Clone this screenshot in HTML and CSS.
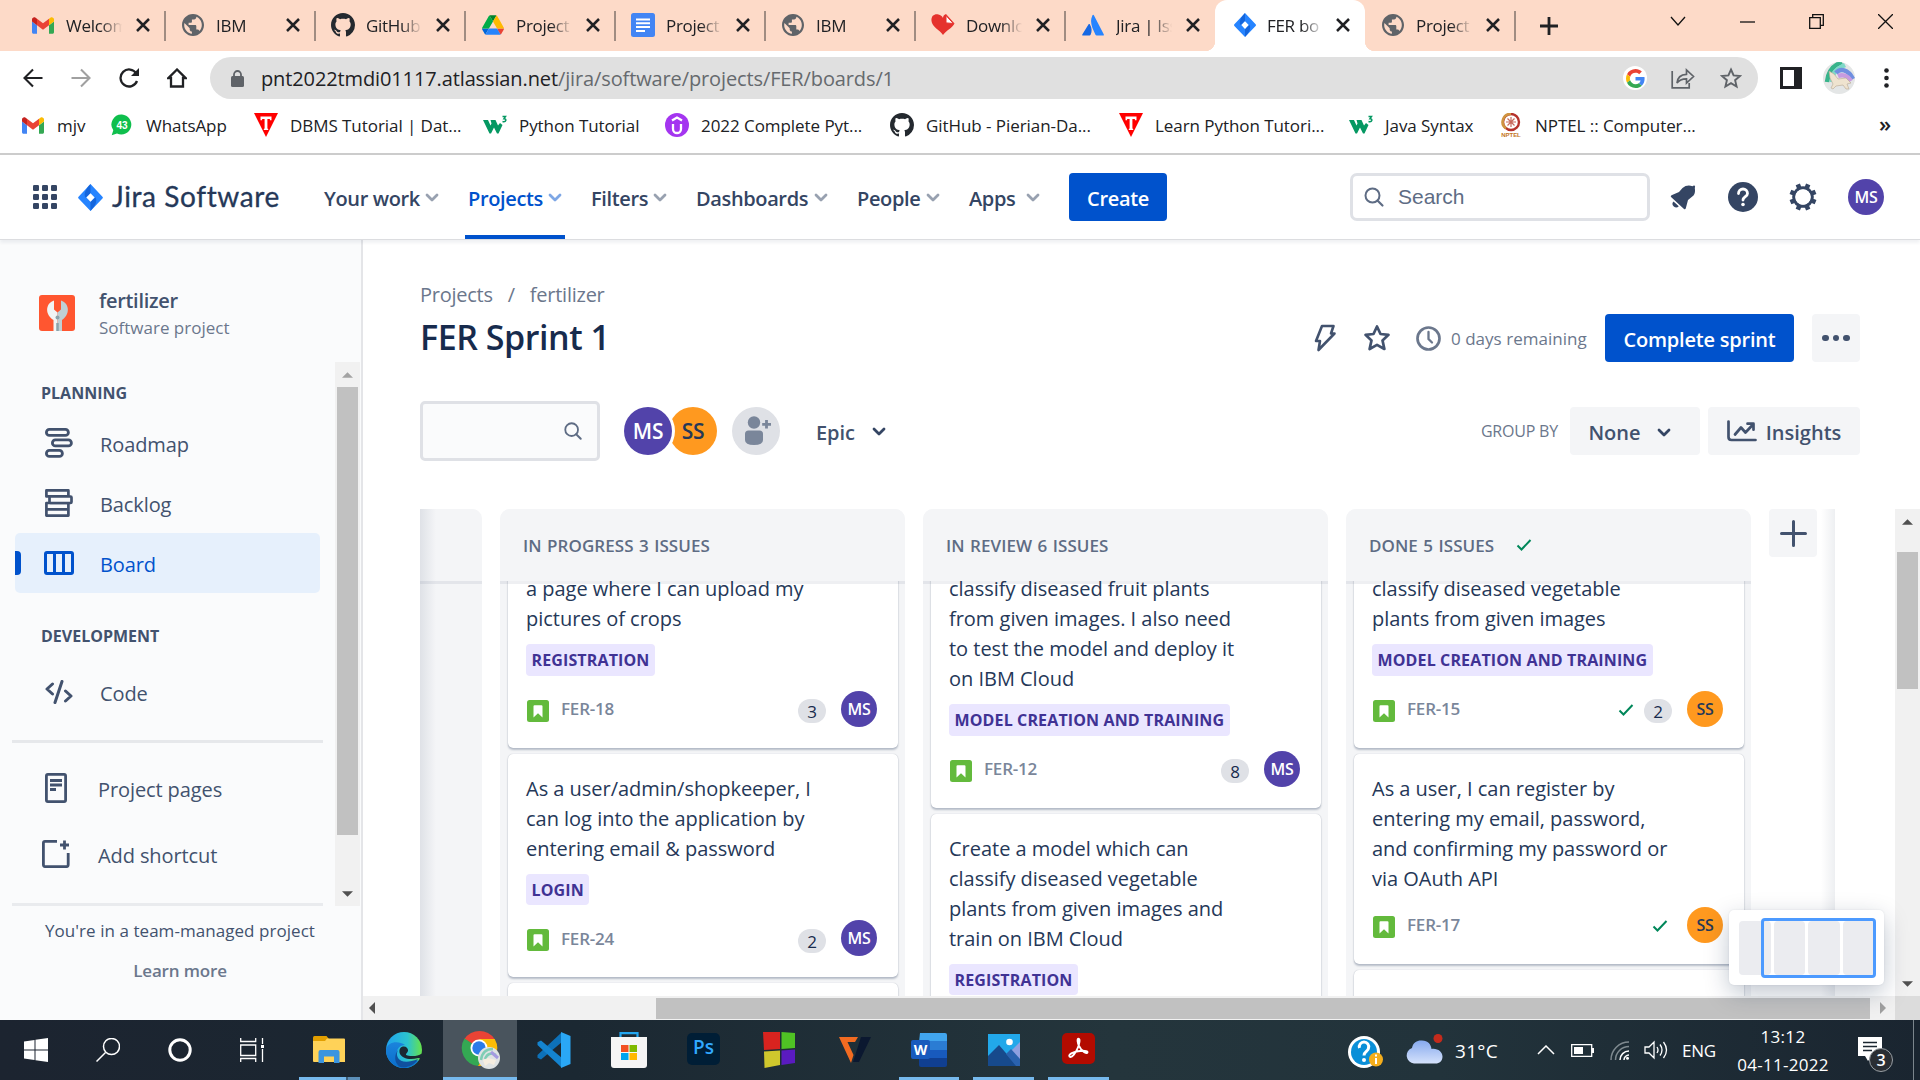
FILE: index.html
```html
<!DOCTYPE html>
<html lang="en">
<head>
<meta charset="utf-8">
<title>FER board - Agile board - Jira</title>
<link rel="stylesheet" href="styles.css">
</head>
<body>
<svg width="0" height="0" class="defs" aria-hidden="true">
  <symbol id="gmail" viewBox="52 42 88 66"><path fill="#4285f4" d="M58 108h14V74L52 59v43c0 3.320 2.690 6 6 6"/><path fill="#34a853" d="M120 108h14c3.320 0 6-2.690 6-6V59l-20 15"/><path fill="#fbbc04" d="M120 48v26l20-15v-8c0-7.420-8.470-11.650-14.400-7.200"/><path fill="#ea4335" d="M72 74V48l24 18 24-18v26L96 92"/><path fill="#c5221f" d="M52 51v8l20 15V48l-5.600-4.200c-5.940-4.450-14.400-.22-14.400 7.200"/></symbol>
  <symbol id="globe" viewBox="2 2 20 20"><path fill="#5f6368" d="M12 2C6.480 2 2 6.480 2 12s4.480 10 10 10 10-4.480 10-10S17.520 2 12 2zm-1 17.930c-3.950-.49-7-3.850-7-7.930 0-.62.08-1.210.21-1.790L9 15v1c0 1.100.9 2 2 2v1.930zm6.900-2.540c-.26-.81-1-1.390-1.900-1.390h-1v-3c0-.55-.45-1-1-1H8v-2h2c.55 0 1-.45 1-1V7h2c1.100 0 2-.9 2-2v-.41c2.930 1.190 5 4.060 5 7.410 0 2.080-.8 3.970-2.100 5.390z"/></symbol>
  <symbol id="github" viewBox="0 0 16 16"><path fill="#24292f" d="M8 0C3.580 0 0 3.580 0 8c0 3.540 2.290 6.530 5.470 7.590.4.07.55-.17.55-.38 0-.19-.01-.82-.01-1.490-2.010.37-2.530-.49-2.690-.94-.09-.23-.48-.94-.82-1.130-.28-.15-.68-.52-.01-.53.63-.01 1.080.58 1.230.82.72 1.210 1.870.87 2.330.66.07-.52.28-.87.51-1.070-1.780-.2-3.640-.89-3.640-3.950 0-.87.31-1.590.82-2.150-.08-.2-.36-1.020.08-2.120 0 0 .67-.21 2.200.82.64-.18 1.320-.27 2-.27.68 0 1.360.09 2 .27 1.530-1.040 2.200-.82 2.200-.82.44 1.100.16 1.920.08 2.120.51.56.82 1.270.82 2.150 0 3.070-1.870 3.750-3.650 3.950.29.25.54.73.54 1.480 0 1.070-.01 1.930-.01 2.200 0 .21.15.46.55.38A8.013 8.013 0 0016 8c0-4.420-3.580-8-8-8z"/></symbol>
  <symbol id="drive" viewBox="0 0 87.3 78"><path fill="#0066da" d="M6.600 66.850l3.850 6.650c.8 1.400 1.950 2.500 3.300 3.300L27.500 53H0c0 1.550.4 3.100 1.200 4.500z"/><path fill="#00ac47" d="M43.650 25L29.900 1.200c-1.350.8-2.500 1.900-3.300 3.300L1.200 48.500A9.060 9.060 0 000 53h27.500z"/><path fill="#ea4335" d="M73.550 76.800c1.350-.8 2.500-1.900 3.300-3.300l1.600-2.750L86.100 57.500c.8-1.400 1.200-2.950 1.200-4.500H59.800l5.850 11.500z"/><path fill="#00832d" d="M43.650 25L57.400 1.200C56.050.4 54.500 0 52.900 0H34.400c-1.600 0-3.150.45-4.500 1.200z"/><path fill="#2684fc" d="M59.800 53H27.500L13.750 76.800c1.350.8 2.900 1.200 4.500 1.200h50.800c1.600 0 3.150-.45 4.500-1.200z"/><path fill="#ffba00" d="M73.400 26.500L60.700 4.500c-.8-1.400-1.950-2.500-3.300-3.300L43.650 25 59.800 53h27.450c0-1.550-.4-3.100-1.200-4.500z"/></symbol>
  <symbol id="docs" viewBox="0 0 24 24"><rect width="24" height="24" rx="2.500" fill="#4285f4"/><path d="M5 6.500h14M5 10.300h14M5 14.100h14M5 17.900h9" stroke="#fff" stroke-width="2"/></symbol>
  <symbol id="heart" viewBox="0 0 24 24"><path fill="#e5322d" d="M12 22C9 17 1 14 .5 8 0 3 3 1 6.500 1.300 9 1.500 11 3 12 5c0-2 1-3.300 3-4l8.500 9.500C21.500 15 15 17.500 12 22z"/><path fill="#fff" stroke="#e5322d" d="M15 2.500l7.300 8-7.300-.6z"/></symbol>
  <symbol id="atlassian" viewBox="0 0 24 24"><path fill="#2684ff" d="M11.300 1.500c.5-1 1.300-1 1.800 0l10.600 20.700c.4.800 0 1.300-.7 1.300h-7c-.6 0-1-.3-1.300-.8C11 15 8 8.500 11.300 1.500z"/><path fill="#1668e3" d="M7.200 11.200c.4-.5 1-.5 1.300 0 2.500 4 2.500 8 .9 11.500-.3.500-.6.800-1.200.8H1c-.7 0-1-.5-.7-1.200z"/></symbol>
  <symbol id="jira" viewBox="0 0 24 26"><path fill="#2684ff" d="M12 0l11.500 12.200c.6.600.6 1.200 0 1.800L12 26 .5 14c-.6-.6-.6-1.200 0-1.800z"/><path fill="#0f5bd0" d="M12 0v8.800L7.300 13.200C4.800 9.500 8 4 12 0zM12 26v-8.800l4.700-4.400c2.500 3.700-.7 9.200-4.700 13.200z" opacity=".75"/><path fill="#fff" d="M12 9l4 4.100-4 4.100-4-4.100z"/></symbol>
  <symbol id="tpoint" viewBox="0 0 24 24"><path fill="#f00" d="M0 0h24L12 24z"/><path fill="#fff" d="M6.500 3.500h11v3.800h-1.600V6h-2.500v9.500l.8.600v.9H9.800v-.9l.8-.6V6H8.100v1.300H6.500z"/></symbol>
  <symbol id="w3" viewBox="0 0 24 20"><path fill="#059862" d="M0 5h5l2.500 5.500L8.500 8.500 7.500 5h5l2.500 5.500L17 8l2.500 2-4 8.500h-1.500L11 12.500 8 18.500H6.500z"/><path fill="none" stroke="#059862" stroke-width="1.500" d="M19.500 1.500h3l-1.500 2.200c3 0 2.300 3.800-1.500 2.800"/></symbol>
  <symbol id="chev" viewBox="0 0 14 9"><path d="M2 2l5 5 5-5" fill="none" stroke="currentColor" stroke-width="2.800" stroke-linecap="round" stroke-linejoin="round"/></symbol>
  <symbol id="close" viewBox="0 0 14 14"><path d="M1 1l12 12M13 1L1 13" stroke="#202124" stroke-width="2.500"/></symbol>
  <symbol id="glass" viewBox="0 0 22 22"><circle cx="9.500" cy="9.500" r="7" fill="none" stroke="currentColor" stroke-width="2"/><path d="M14.500 14.500l5 5" stroke="currentColor" stroke-width="2.200" stroke-linecap="round"/></symbol>
  <symbol id="story" viewBox="0 0 22 22"><rect width="22" height="22" rx="2.500" fill="#63ba3c"/><path fill="#fff" d="M6.500 6.200q0-1 1-1h7q1 0 1 1v11.300L11 13.300l-4.500 4.200z"/></symbol>
  <symbol id="check" viewBox="0 0 16 12"><path d="M1.500 6.500l4 4L14.500 1" fill="none" stroke="#00875a" stroke-width="2"/></symbol>
  <symbol id="up" viewBox="0 0 12 6"><path d="M0 6l6-6 6 6z" fill="currentColor"/></symbol>
</svg>

<div class="tabstrip">
  <div class="tab"><svg class="fav short"><use href="#gmail"/></svg><span>Welcom</span><svg class="x"><use href="#close"/></svg></div>
  <div class="tab"><svg class="fav"><use href="#globe"/></svg><span>IBM</span><svg class="x"><use href="#close"/></svg></div>
  <div class="tab"><svg class="fav wide"><use href="#github"/></svg><span>GitHub</span><svg class="x"><use href="#close"/></svg></div>
  <div class="tab"><svg class="fav"><use href="#drive"/></svg><span>Project</span><svg class="x"><use href="#close"/></svg></div>
  <div class="tab"><svg class="fav wide"><use href="#docs"/></svg><span>Project</span><svg class="x"><use href="#close"/></svg></div>
  <div class="tab"><svg class="fav"><use href="#globe"/></svg><span>IBM</span><svg class="x"><use href="#close"/></svg></div>
  <div class="tab"><svg class="fav wide"><use href="#heart"/></svg><span>Downlo</span><svg class="x"><use href="#close"/></svg></div>
  <div class="tab nosep"><svg class="fav"><use href="#atlassian"/></svg><span>Jira | Iss</span><svg class="x"><use href="#close"/></svg></div>
  <div class="tab active"><svg class="fav wide"><use href="#jira"/></svg><span>FER bo</span><svg class="x"><use href="#close"/></svg></div>
  <div class="tab"><svg class="fav"><use href="#globe"/></svg><span>Project</span><svg class="x"><use href="#close"/></svg></div>
  <svg class="newtab" viewBox="0 0 18 18"><path d="M9 0v18M0 9h18" stroke="#202124" stroke-width="2.800"/></svg>
  <div class="winctl">
    <svg width="16" height="11" viewBox="0 0 16 11"><path d="M1 1l7 8 7-8" fill="none" stroke="#111" stroke-width="1.300"/></svg>
    <svg width="15" height="11" viewBox="0 0 15 11"><path d="M0 6h15" stroke="#111" stroke-width="1.300"/></svg>
    <svg width="15" height="15" viewBox="0 0 15 15"><path d="M.7 3.700h10.600v10.600H.7zM3.700 3.700v-3h10.600v10.600h-3" fill="none" stroke="#111" stroke-width="1.300"/></svg>
    <svg width="15" height="15" viewBox="0 0 15 15"><path d="M0 0l15 15M15 0L0 15" stroke="#111" stroke-width="1.300"/></svg>
  </div>
</div>

<div class="toolbar">
  <svg class="tb" viewBox="0 0 20 20"><path d="M19.500 10H2M10 1.500L1.500 10l8.500 8.500" fill="none" stroke="#202124" stroke-width="2.100"/></svg>
  <svg class="tb" viewBox="0 0 20 20"><path d="M.5 10H18M10 1.500l8.500 8.500-8.500 8.500" fill="none" stroke="#a0a0a0" stroke-width="2.100"/></svg>
  <svg class="tb" viewBox="0 0 20 20"><path d="M17.300 5.500A8.500 8.500 0 1018 13" fill="none" stroke="#202124" stroke-width="2.300"/><path d="M20 0v8h-8z" fill="#202124"/></svg>
  <svg class="tb" viewBox="0 0 20 20"><path d="M10 1.500L1.500 10H4v8.500h12V10h2.500z" fill="none" stroke="#202124" stroke-width="2.300"/></svg>
  <div class="omnibox">
    <svg class="lock" viewBox="0 0 13 17"><rect y="6" width="13" height="11" rx="1.500" fill="#5f6368"/><path d="M3 7V4.500a3.500 3.500 0 017 0V7" fill="none" stroke="#5f6368" stroke-width="1.800"/></svg>
    <div class="url">pnt2022tmdi01117.atlassian.net<span>/jira/software/projects/FER/boards/1</span></div>
    <div class="gbadge"><svg width="19" height="19" viewBox="0 0 48 48"><path fill="#ea4335" d="M24 9.500c3.540 0 6.710 1.220 9.210 3.600l6.850-6.850C35.900 2.380 30.470 0 24 0 14.620 0 6.510 5.380 2.560 13.220l7.980 6.190C12.430 13.720 17.740 9.500 24 9.500z"/><path fill="#4285f4" d="M46.980 24.550c0-1.570-.15-3.090-.38-4.550H24v9.020h12.940c-.58 2.960-2.260 5.480-4.780 7.180l7.730 6c4.510-4.180 7.090-10.360 7.090-17.650z"/><path fill="#fbbc05" d="M10.530 28.590c-.48-1.450-.76-2.990-.76-4.590s.27-3.140.76-4.590l-7.980-6.190C.92 16.460 0 20.120 0 24c0 3.880.92 7.540 2.560 10.780l7.970-6.190z"/><path fill="#34a853" d="M24 48c6.480 0 11.930-2.130 15.890-5.810l-7.730-6c-2.150 1.450-4.920 2.300-8.160 2.300-6.260 0-11.570-4.220-13.470-9.910l-7.980 6.190C6.510 42.620 14.620 48 24 48z"/></svg></div>
    <svg class="share" viewBox="0 0 24 22"><path d="M1.200 4v16.800h17V16M6 16c.5-6 4-8.500 9.500-8.700V3l7 6.500-7 6.500v-4.200C11 11.800 8 13 6 16z" fill="none" stroke="#5f6368" stroke-width="1.700"/></svg>
    <svg class="ostar" viewBox="0 0 22 21"><path d="M11 2l2.600 5.900 6.400.6-4.900 4.200 1.500 6.300L11 15.700 5.400 19l1.500-6.300L2 8.500l6.400-.6z" fill="none" stroke="#5f6368" stroke-width="1.900"/></svg>
  </div>
  <svg class="side" viewBox="0 0 22 22"><rect x="1.500" y="1.500" width="19" height="19" fill="#fff" stroke="#202124" stroke-width="3"/><path d="M14 1h7v20h-7z" fill="#202124"/></svg>
  <svg class="pic" viewBox="0 0 32 32"><clipPath id="pc"><circle cx="16" cy="16" r="16"/></clipPath><g clip-path="url(#pc)"><path fill="#e4e6e6" d="M0 0h32v32H0z"/><g fill="none" stroke-width="4.500"><path d="M4 20C5 8 11 3 19 0" stroke="#38b48b"/><path d="M9 20C9 10 14 7 22 3" stroke="#7fd8c8"/><path d="M13 11c4-5 12-4 17 6" stroke="#6f8fe0"/><path d="M15 14c5-2 10 0 13 5" stroke="#c79be0"/></g><path fill="#efe3cf" stroke="#b9a892" stroke-width=".6" d="M6 9l5 3 4 5 8-1 5 5-4 1 2 5h-3l-3-4-7 1-3 3-2-1 2-4-3-6z"/></g></svg>
  <svg class="kebab" viewBox="0 0 5 20"><circle cx="2.500" cy="2.500" r="2.300"/><circle cx="2.500" cy="10" r="2.300"/><circle cx="2.500" cy="17.500" r="2.300"/></svg>
</div>

<div class="bookmarks">
  <div class="bm"><svg class="fav short"><use href="#gmail"/></svg><span>mjv</span></div>
  <div class="bm"><svg class="fav" viewBox="0 0 22 22"><path d="M11 .5a10 10 0 11-5 19L.7 21.300l1.600-5A10 10 0 0111 .5z" fill="#0fbf4d"/><text x="11" y="15" text-anchor="middle" class="wa">43</text></svg><span>WhatsApp</span></div>
  <div class="bm"><svg class="fav wide"><use href="#tpoint"/></svg><span>DBMS Tutorial | Dat...</span></div>
  <div class="bm"><svg class="fav wide"><use href="#w3"/></svg><span>Python Tutorial</span></div>
  <div class="bm"><svg class="fav wide" viewBox="0 0 24 24"><circle cx="12" cy="12" r="12" fill="#a435f0"/><path d="M8 11v5a4 4 0 008 0v-5M7 7.500l5-3 5 3" fill="none" stroke="#fff" stroke-width="2.300"/></svg><span>2022 Complete Pyt...</span></div>
  <div class="bm"><svg class="fav wide"><use href="#github"/></svg><span>GitHub - Pierian-Da...</span></div>
  <div class="bm"><svg class="fav wide"><use href="#tpoint"/></svg><span>Learn Python Tutori...</span></div>
  <div class="bm"><svg class="fav wide"><use href="#w3"/></svg><span>Java Syntax</span></div>
  <div class="bm"><svg class="fav wide" viewBox="0 0 24 24"><circle cx="12" cy="9" r="8" fill="none" stroke="#b5322c" stroke-width="2.400"/><path d="M12 1a8 8 0 00-5 14.500" fill="none" stroke="#cf9440" stroke-width="2.600"/><path d="M12 4v10M7 9h10M8.500 5.500l7 7M15.500 5.500l-7 7" stroke="#c76a5e" stroke-width="1.200"/><text x="12" y="23.500" text-anchor="middle" class="np">NPTEL</text></svg><span>NPTEL :: Computer...</span></div>
  <div class="more">»</div>
</div>

<header class="nav">
  <svg class="grid9" viewBox="0 0 24 24" fill="#344563"><g id="r3"><rect width="6" height="6" rx="1.300"/><rect x="9" width="6" height="6" rx="1.300"/><rect x="18" width="6" height="6" rx="1.300"/></g><use href="#r3" y="9"/><use href="#r3" y="18"/></svg>
  <div class="brand"><svg width="25" height="27"><use href="#jira"/></svg><span>Jira Software</span></div>
  <nav class="menu">
    <a>Your work<svg class="chev"><use href="#chev"/></svg></a>
    <a class="on">Projects<svg class="chev"><use href="#chev"/></svg></a>
    <a>Filters<svg class="chev"><use href="#chev"/></svg></a>
    <a>Dashboards<svg class="chev"><use href="#chev"/></svg></a>
    <a>People<svg class="chev"><use href="#chev"/></svg></a>
    <a>Apps<svg class="chev"><use href="#chev"/></svg></a>
  </nav>
  <button class="primary create">Create</button>
  <div class="search"><svg width="22" height="22"><use href="#glass"/></svg><span>Search</span></div>
  <div class="navicons">
    <svg width="26" height="26" viewBox="0 0 26 26" fill="#344563"><path d="M22.500 2.200Q17 .2 12.500 4L9 8 1.500 11.300q-1.500.9-.2 2L14 25q1.300.8 1.800-.8L18 16l5.500-4.500q2.200-2.500 1.300-7.500.8-2-.3-2.500-1-.3-2 .7z"/><path d="M3.500 17.500a3.200 3.200 0 005.300 4.700z"/></svg>
    <svg width="30" height="30" viewBox="0 0 30 30"><circle cx="15" cy="15" r="15" fill="#344563"/><path d="M10.500 11.500a4.500 4.500 0 119 0c0 3-4.500 3.300-4.500 6.500" fill="none" stroke="#fff" stroke-width="2.800" stroke-linecap="round"/><circle cx="15" cy="22.500" r="1.800" fill="#fff"/></svg>
    <svg width="28" height="28" viewBox="0 0 28 28"><g transform="rotate(22.500 14 14)"><circle cx="14" cy="14" r="9.200" fill="none" stroke="#344563" stroke-width="3.200"/><path d="M14 .4v4M14 23.600v4M.4 14h4M23.600 14h4M4.400 4.400l3 3M20.600 20.600l3 3M4.400 23.600l3-3M20.600 7.400l3-3" stroke="#344563" stroke-width="4.600"/></g><circle cx="14" cy="14" r="7.700" fill="#fff"/></svg>
    <div class="av ms">MS</div>
  </div>
</header>

<div class="app">
  <aside class="sidebar">
    <div class="project">
      <svg width="36" height="36" viewBox="0 0 36 36"><rect width="36" height="36" rx="3" fill="#ff5630"/><path fill="#f1f4f4" d="M15 5.500v9l3.500 3v18.500h-4V25C6 20 6 8.500 15 5.500z"/><path fill="#bfcfd4" d="M22 5.500v9l-3.500 3v18.500H23V25c8-5 8-16.500-1-19.500z"/><circle cx="18.500" cy="22.500" r="2" fill="#8ba3ab"/><path d="M18.500 28v8" stroke="#8ba3ab" stroke-width="2.500"/></svg>
      <div><h2>fertilizer</h2><p>Software project</p></div>
    </div>
    <div class="sidescroll">
      <div class="list">
        <h3>PLANNING</h3>
        <a class="item"><svg width="28" height="30" viewBox="0 0 28 30" fill="none" stroke="#42526e" stroke-width="2.800"><rect x="1.400" y="1.400" width="22" height="6" rx="3"/><rect x="7.400" y="11.900" width="19" height="6" rx="3"/><rect x="1.400" y="22.400" width="16" height="6" rx="3"/></svg><span>Roadmap</span></a>
        <a class="item"><svg width="28" height="28" viewBox="0 0 28 28" fill="#fafbfc" stroke="#42526e" stroke-width="2.700"><path d="M1.400 1.400h22v6h-22zM1.400 14h22v12.600h-22zM1.400 20.300h22" stroke-linejoin="round"/><rect x="4.500" y="7.500" width="22" height="6.500" rx="1"/></svg><span>Backlog</span></a>
        <a class="item sel"><svg width="30" height="24" viewBox="0 0 30 24" fill="none" stroke="#0052cc" stroke-width="3"><rect x="1.500" y="1.500" width="27" height="21" rx="1.500"/><path d="M10.500 1v22M19.500 1v22"/></svg><span>Board</span></a>
        <h3 class="dev">DEVELOPMENT</h3>
        <a class="item"><svg width="28" height="24" viewBox="0 0 28 24" fill="none" stroke="#42526e" stroke-width="3" stroke-linecap="round" stroke-linejoin="round"><path d="M7.500 4L2 9l5.500 5M17 1.500L10 22.500M20.500 11l5.500 5-5.500 5"/></svg><span>Code</span></a>
        <hr>
        <a class="item pages"><svg width="22" height="30" viewBox="0 0 22 30" fill="none" stroke="#42526e" stroke-width="2.800"><rect x="1.400" y="1.400" width="19.200" height="27.200" rx="1.500"/><path d="M5 7.500h12M5 12h12M5 16.500h6"/></svg><span>Project pages</span></a>
        <a class="item cut"><svg width="28" height="28" viewBox="0 0 28 28" fill="none" stroke="#42526e" stroke-width="2.800"><path d="M15 1.400H3q-1.600 0-1.600 1.600v21.600q0 2 1.600 2h21.600q1.600 0 1.600-2V13M22.500.5v9M18 5h9"/></svg><span>Add shortcut</span></a>
      </div>
      <div class="vbar"><svg class="dis"><use href="#up"/></svg><div class="thumb"></div><svg class="dn"><use href="#up"/></svg></div>
    </div>
    <div class="sidefoot"><p>You're in a team-managed project</p><b>Learn more</b></div>
  </aside>

  <main class="main">
    <div class="crumbs"><span>Projects</span><span>/</span><span>fertilizer</span></div>
    <div class="head">
      <h1>FER Sprint 1</h1>
      <div class="actions">
        <svg width="24" height="28" viewBox="0 0 24 28"><path d="M9 2h11.500L18 9.500h3.500L5.500 26l1.500-9H3z" fill="none" stroke="#42526e" stroke-width="2.600" stroke-linejoin="round"/></svg>
        <svg width="28" height="28" viewBox="0 0 28 28"><path d="M14 2.500l3.500 7.500 8 .8-6 5.600 1.900 8.600L14 20.800 6.600 25l1.900-8.600-6-5.600 8-.8z" fill="none" stroke="#42526e" stroke-width="2.700" stroke-linejoin="round"/></svg>
        <svg width="25" height="25" viewBox="0 0 25 25"><circle cx="12.500" cy="12.500" r="11" fill="none" stroke="#6b778c" stroke-width="2.700"/><path d="M12.500 6v7l3.500 3.500" fill="none" stroke="#6b778c" stroke-width="2.300" stroke-linecap="round"/></svg>
        <span class="days">0 days remaining</span>
        <button class="primary">Complete sprint</button>
        <button class="dots"><i></i><i></i><i></i></button>
      </div>
    </div>
    <div class="filters">
      <div class="find"><svg width="22" height="22"><use href="#glass"/></svg></div>
      <div class="people"><div class="av big ms">MS</div><div class="av big ss">SS</div></div>
      <div class="av big add"><svg width="28" height="30" viewBox="0 0 28 30" fill="#7a869a"><circle cx="10" cy="6.500" r="6.200"/><path d="M1 18q0-3.500 3.500-3.500h11q3.500 0 3.500 3.500v6q0 5-9 5t-9-5z"/><path d="M22.500 4v8.500M18.200 8.300H27" stroke="#7a869a" stroke-width="2.800"/></svg></div>
      <span class="epicf">Epic</span><svg class="chev dark"><use href="#chev"/></svg>
      <span class="group">GROUP BY</span>
      <button class="grey none">None<svg class="chev dark"><use href="#chev"/></svg></button>
      <button class="grey ins"><svg width="30" height="22" viewBox="0 0 30 22" fill="none" stroke="#42526e" stroke-width="2.700" stroke-linecap="round" stroke-linejoin="round"><path d="M1.500 1.500V17q0 3 3 3h24M8 14.500l6-7 4.500 5L26 4.500M20.500 3.700h6v6"/></svg>Insights</button>
    </div>

    <div class="board">
      <div class="lane">
        <section class="col first"><header></header></section>
        <section class="col">
          <header>IN PROGRESS 3 ISSUES</header>
          <div class="cards">
            <article class="card cutoff"><p>a page where I can upload my<br>pictures of crops</p><b class="tag">REGISTRATION</b>
              <footer><svg class="st"><use href="#story"/></svg><span class="key">FER-18</span><span class="pts">3</span><div class="av ms">MS</div></footer></article>
            <article class="card"><p>As a user/admin/shopkeeper, I<br>can log into the application by<br>entering email &amp; password</p><b class="tag">LOGIN</b>
              <footer><svg class="st"><use href="#story"/></svg><span class="key">FER-24</span><span class="pts">2</span><div class="av ms">MS</div></footer></article>
            <article class="card empty"></article>
          </div>
        </section>
        <section class="col">
          <header>IN REVIEW 6 ISSUES</header>
          <div class="cards">
            <article class="card cutoff"><p>classify diseased fruit plants<br>from given images. I also need<br>to test the model and deploy it<br>on IBM Cloud</p><b class="tag">MODEL CREATION AND TRAINING</b>
              <footer><svg class="st"><use href="#story"/></svg><span class="key">FER-12</span><span class="pts">8</span><div class="av ms">MS</div></footer></article>
            <article class="card"><p>Create a model which can<br>classify diseased vegetable<br>plants from given images and<br>train on IBM Cloud</p><b class="tag">REGISTRATION</b>
              <footer></footer></article>
          </div>
        </section>
        <section class="col">
          <header>DONE 5 ISSUES<svg class="ck"><use href="#check"/></svg></header>
          <div class="cards">
            <article class="card cutoff"><p>classify diseased vegetable<br>plants from given images</p><b class="tag">MODEL CREATION AND TRAINING</b>
              <footer><svg class="st"><use href="#story"/></svg><span class="key">FER-15</span><svg class="ck"><use href="#check"/></svg><span class="pts">2</span><div class="av ss">SS</div></footer></article>
            <article class="card"><p>As a user, I can register by<br>entering my email, password,<br>and confirming my password or<br>via OAuth API</p>
              <footer class="plain"><svg class="st"><use href="#story"/></svg><span class="key">FER-17</span><svg class="ck last"><use href="#check"/></svg><div class="av ss">SS</div></footer></article>
            <article class="card empty"></article>
          </div>
        </section>
        <button class="plus"><svg width="27" height="27" viewBox="0 0 27 27"><path d="M13.500 1.500v24M1.500 13.500h24" stroke="#42526e" stroke-width="3" stroke-linecap="round"/></svg></button>
      </div>
      <div class="fade"></div>
      <div class="vbar page"><svg><use href="#up"/></svg><div class="thumb"></div><svg class="dn"><use href="#up"/></svg></div>
    </div>
    <div class="hbar"><svg class="lf" viewBox="0 0 6 12"><path d="M6 0v12L0 6z" fill="#505050"/></svg><div class="hthumb"></div><svg class="rt" viewBox="0 0 6 12"><path d="M0 0v12l6-6z" fill="#a0a0a0"/></svg><div class="corner"></div></div>
    <div class="minimap"><i></i><i></i><i></i><i></i><div class="view"></div></div>
  </main>
</div>

<div class="taskbar">
  <div class="apps">
    <div class="t"><svg width="24" height="24" viewBox="0 0 24 24" fill="#fff"><path d="M0 3.500l10.500-1.500v9.500H0zM11.500 1.800L24 0v11.500H11.500zM0 12.500h10.500V22L0 20.500zM11.500 12.500H24V24l-12.500-1.800z"/></svg></div>
    <div class="t"><svg width="24" height="24" viewBox="0 0 24 24" fill="none" stroke="#fff" stroke-width="1.500"><circle cx="15.500" cy="8.500" r="8"/><path d="M9.500 14.500L.5 23.500"/></svg></div>
    <div class="t"><svg width="24" height="24" viewBox="0 0 24 24"><circle cx="12" cy="12" r="10.200" fill="none" stroke="#fff" stroke-width="3"/></svg></div>
    <div class="t"><svg width="24" height="24" viewBox="0 0 24 24" fill="none" stroke="#fff" stroke-width="1.300"><path d="M.7 7h15v10.500H.7zM.7 0v3.500h15V0M.7 24v-3.500h15V24M22.500 0v6M22.500 11v13"/><path d="M21 7h3v3h-3z" fill="#fff" stroke="none"/></svg></div>
    <div class="t run exp"><svg width="32" height="28" viewBox="0 0 32 28"><path fill="#e29f00" d="M0 1.500Q0 0 1.500 0h12l2.500 3v5H0z"/><path fill="#ffd258" d="M0 5h12l2-2.500h17q1 0 1 1V26H1q-1 0-1-1z"/><path fill="#3b95e0" d="M5.500 16q0-2 2-2h17q2 0 2 2v11h-5.500v-6.500h-10V27H5.500z"/></svg></div>
    <div class="t edge"><svg width="36" height="36" viewBox="0 0 36 36"><defs><linearGradient id="e1" x2="1"><stop stop-color="#1fa2ee"/><stop offset=".6" stop-color="#2cc3cf"/><stop offset="1" stop-color="#66e34a"/></linearGradient><linearGradient id="e2" y2="1" x2="0"><stop stop-color="#1b84dc"/><stop offset="1" stop-color="#0a6dcb"/></linearGradient></defs><circle cx="18" cy="18" r="18" fill="url(#e1)"/><path fill="url(#e2)" d="M0 18C1 10 12 8 19 13c-6 0-9 5-8 10 1 7 9 11 22 5A18 18 0 010 18z"/><path fill="#10509e" d="M12 18c-4 8 3 16 20 9-5 8-14 9-18 8-6-4-6-12-2-17z"/><path fill="#1b2832" d="M21.500 23.500c-3-.5-1-2 .3-4 1-2-1-5-4-5-4 0-5 4-4 7 2 5 10 7 18.400 4.500l5 1-1.500-5.500c-4 3-9.700 3-14.200 2z"/></svg></div>
    <div class="t run cur"><svg width="42" height="40" viewBox="0 0 42 40"><path fill="#ea4335" d="M18 18L3.500 9A18 18 0 0133.500 9z"/><path fill="#34a853" d="M18 18L3.500 8.500A18 18 0 0017 36l8-14z"/><path fill="#fbbc05" d="M18 9h15.700A18 18 0 0117 36l9-14z"/><circle cx="18" cy="18" r="8.500" fill="#fff"/><circle cx="18" cy="18" r="6.700" fill="#2a7be8"/><circle cx="28" cy="28" r="11" fill="#dfe3e3"/><path d="M20 30c1-8 6-11 12-11M24 29c2-5 6-7 11-4" fill="none" stroke="#7fcdb5" stroke-width="2.500"/><path d="M30 22l7 6" stroke="#a49be0" stroke-width="3"/><path d="M22 30l5-2 8 2-2 5-5-2-4 3z" fill="#f5eddf"/></svg></div>
    <div class="t"><svg width="36" height="36" viewBox="0 0 36 36"><path fill="#0d71b8" d="M26 10L5 27.500 1.500 25.800V23L25 1z"/><path fill="#1484d0" d="M26 26L5 8.500l-3.500 1.700V13L25 35z"/><path fill="#2aa7f5" d="M25 0l9.500 4v28L25 36z"/></svg></div>
    <div class="t"><svg width="36" height="36" viewBox="0 0 36 36"><path d="M9.500 6V1.200h17V6" fill="none" stroke="#22a6f0" stroke-width="2.200"/><path fill="#f5f5f5" d="M0 5h36v28q0 3-3 3H3q-3 0-3-3z"/><path fill="#f25022" d="M10 13h7.500v7H10z"/><path fill="#7fba00" d="M18.500 13H26v7h-7.500z"/><path fill="#00a4ef" d="M10 21h7.500v7H10z"/><path fill="#ffb900" d="M18.500 21H26v7h-7.500z"/></svg></div>
    <div class="t"><div class="ps">Ps</div></div>
    <div class="t"><svg width="32" height="36" viewBox="0 0 32 36"><path fill="#d8231f" d="M0 0h17v17L1 18z"/><path fill="#4fc224" d="M18.500 0L32 1v15l-13.500 1z"/><path fill="#cfc72d" d="M1 19.500l16-1v14.500L1.500 36z"/><path fill="#5a1bc0" d="M18.500 18.500L32 17.500V31l-13.500 2z"/></svg></div>
    <div class="t"><svg width="32" height="26" viewBox="0 0 32 26"><path fill="#f26b21" d="M0 0h19l-3 5H8.500l6 13-2.500 8z"/><path fill="#0b1830" d="M22 0h10L20 25h-6z"/></svg></div>
    <div class="t run"><svg class="lft" width="36" height="34" viewBox="0 0 36 34"><path fill="#41a5ee" d="M9 0h25q2 0 2 2v7H8z"/><path fill="#2b7cd3" d="M8 8h28v9H8z"/><path fill="#185abd" d="M8 17h28v8H8z"/><path fill="#103f91" d="M8 25h28v7q0 2-2 2H10q-2 0-2-2z"/><rect y="7" width="19" height="19" rx="2" fill="#185abd"/><text x="9.500" y="22" text-anchor="middle" class="wd">W</text></svg></div>
    <div class="t run"><svg width="32" height="32" viewBox="0 0 32 32"><path fill="#22a8ea" d="M0 0h32v32H0z"/><path fill="#8fa0e0" d="M32 8v24L20 20z"/><path fill="#174a8c" d="M0 22l11-11 18 21H0z"/><path fill="#2a62ae" d="M18 20l5-5 9 10v7h-4z"/><circle cx="21.500" cy="8" r="3.300" fill="#fff"/></svg></div>
    <div class="t run"><svg class="acro" width="33" height="31" viewBox="0 0 33 31"><rect width="33" height="31" rx="5" fill="#b30b00"/><path d="M7.500 23.500C6 21.500 11 19 16 18.200s10-.5 9.500 1.200c-.7 2-6-1-8.500-6.500-1.500-3.500-2-7-.5-7.200 1.800 0 1 5-.8 9.300-1.800 4.300-5.700 10.500-8.200 8.500z" fill="none" stroke="#fff" stroke-width="1.900"/></svg></div>
  </div>
  <div class="tray">
    <svg class="help" width="36" height="34" viewBox="0 0 36 34"><circle cx="16" cy="16" r="16" fill="#fff"/><circle cx="16" cy="16" r="13" fill="#0a8fd8"/><path d="M11.500 12a4.700 4.700 0 119 0c0 3.500-4.500 3.500-4.500 7.500" fill="none" stroke="#fff" stroke-width="3"/><circle cx="16" cy="24" r="2" fill="#fff"/><circle cx="28" cy="23.500" r="7" fill="#f5ae1c"/><path d="M28 22v6M28 18.500v2" stroke="#fff" stroke-width="2"/></svg>
    <svg class="cloud" width="38" height="30" viewBox="0 0 38 30"><defs><linearGradient id="cl" y2="1" x2="0"><stop stop-color="#86a9ee"/><stop offset="1" stop-color="#d5e2fb"/></linearGradient></defs><path fill="url(#cl)" d="M8 29.500A8 8 0 016 14C7 8 12 6 16 6.500c6 0 9 4 9.500 8.500 6-1 11 3 11 7.500s-3 7-7 7z"/><circle cx="32" cy="4.500" r="4.500" fill="#c42b1c"/></svg>
    <span class="temp">31°C</span>
    <svg class="uc" width="18" height="10" viewBox="0 0 18 10"><path d="M1 9l8-8 8 8" fill="none" stroke="#fff" stroke-width="1.500"/></svg>
    <svg class="bat" width="23" height="13" viewBox="0 0 23 13"><path d="M.7.7h20v11.600h-20z" fill="none" stroke="#fff" stroke-width="1.300"/><path d="M3 3h9v7H3zM21 4h2v5h-2z" fill="#fff"/></svg>
    <svg class="wifi" width="20" height="19" viewBox="0 0 20 19" fill="none" stroke-width="1.500"><path d="M1 19A18 18 0 0119 1M5.500 19A13.500 13.500 0 0119 5.500" stroke="#7f8a90"/><path d="M10 19a9 9 0 019-9M14 19a5 5 0 015-5" stroke="#fff"/><circle cx="17.500" cy="17.300" r="1.500" fill="#fff"/></svg>
    <svg class="spk" width="24" height="20" viewBox="0 0 24 20" fill="none" stroke="#fff" stroke-width="1.300"><path d="M1 7h4l5-5v16l-5-5H1zM13 7q2 3 0 6M16 4.500q4 5.500 0 11M19.500 2q6 8 0 16"/></svg>
    <span class="eng">ENG</span>
    <div class="clock"><span>13:12</span><span>04-11-2022</span></div>
    <div class="notif"><svg width="24" height="24" viewBox="0 0 24 24"><path fill="#fff" d="M0 0h24v19H14l-4 5-3-5H0z"/><path d="M5 5.500h14M5 9.500h14M5 13.500h9" stroke="#1b2630" stroke-width="1.300"/></svg><i>3</i></div>
  </div>
</div>
</body>
</html>
```
FILE: styles.css
```css
* { box-sizing: border-box; margin: 0; padding: 0; }
body { width: 1920px; height: 1080px; overflow: hidden; display: flex; flex-direction: column; background: #fff; font-family: "Open Sans", "Noto Sans", sans-serif; color: #172b4d; }
svg { display: block; flex: none; }
.defs { position: absolute; }
button { border: 0; font: inherit; display: flex; align-items: center; justify-content: center; }
span, b, h1, h2, h3, p, a, button { white-space: nowrap; }

/* browser tabs */
.tabstrip { height: 51px; flex: none; display: flex; background: #fddac8; padding-left: 15px; position: relative; }
.tab { width: 150px; display: grid; grid-template-columns: 24px 58px 14px; column-gap: 12px; align-items: center; padding: 0 0 1px 15px; position: relative; font-size: 17px; letter-spacing: -.3px; color: #202124; }
.tab:not(.active):not(.nosep)::after { content: ""; position: absolute; right: -1px; top: 11px; height: 30px; width: 2px; background: #a08c82; }
.tab span { overflow: hidden; -webkit-mask-image: linear-gradient(90deg, #000 60%, transparent 97%); mask-image: linear-gradient(90deg, #000 60%, transparent 97%); }
.tab.active { background: #fff; border-radius: 12px 12px 0 0; padding-left: 17px; column-gap: 11px; }
.tab.active::before { content: ""; position: absolute; left: -10px; right: -10px; bottom: 0; height: 10px; background: radial-gradient(circle at 0 0, transparent 10px, #fff 10.5px) left / 10px 10px no-repeat, radial-gradient(circle at 100% 0, transparent 10px, #fff 10.5px) right / 10px 10px no-repeat; }
.fav { width: 22px; height: 22px; justify-self: center; }
.tab .fav { position: relative; left: 1px; }
.fav.wide { width: 24px; height: 24px; }
.fav.short { height: 17px; }
.x { width: 14px; height: 14px; }
.newtab { width: 18px; height: 18px; margin: 17px 0 0 25px; }
.winctl { margin: 0 27px 0 auto; display: flex; gap: 54px; height: 43px; align-items: center; }

/* toolbar */
.toolbar { height: 54px; flex: none; display: flex; align-items: center; padding: 0 0 0 23px; }
.tb { width: 20px; height: 20px; margin-right: 28px; }
.omnibox { width: 1548px; height: 42px; margin-left: -5px; border-radius: 21px; background: #e0e0e0; display: flex; align-items: center; padding: 0 16px 0 21px; }
.lock { width: 13px; height: 17px; }
.url { margin: 1px auto 0 17px; font-size: 20px; letter-spacing: -.12px; color: #202124; white-space: nowrap; }
.url span { color: #666a6e; }
.gbadge { width: 24px; height: 24px; border-radius: 50%; background: #fff; display: grid; place-items: center; }
.share { width: 24px; height: 22px; margin: 0 25px 0 24px; }
.ostar { width: 22px; height: 22px; }
.side { width: 22px; height: 22px; margin-left: 22px; }
.pic { width: 32px; height: 32px; margin-left: 21px; }
.kebab { width: 5px; height: 20px; margin-left: 29px; fill: #202124; }

/* bookmarks */
.bookmarks { height: 50px; flex: none; display: grid; grid-template-columns: 89px 144px 229px 182px 225px 229px 230px 150px 380px 30px; padding: 0 0 8px 21px; align-items: center; border-bottom: 2px solid #ccc; font-size: 17px; letter-spacing: -.06px; color: #202124; }
.bm { display: flex; align-items: center; }
.bm .fav { margin: 0 13px 0 1px; }
.bm .fav.wide { margin: 0 12px 0 0; }
.more { font-size: 22px; font-weight: 600; line-height: 20px; padding-bottom: 4px; }
.wa { font: bold 10px "Liberation Sans", sans-serif; fill: #fff; }
.np { font: bold 6px "Liberation Sans", sans-serif; fill: #c5761f; }

/* product navigation */
.nav { height: 85px; flex: none; display: flex; align-items: center; padding-left: 33px; border-bottom: 1px solid #dcdde0; background: #fff; position: relative; z-index: 3; box-shadow: 0 3px 3px rgba(9,30,66,.06); }
.grid9 { width: 24px; height: 24px; }
.brand { display: flex; align-items: center; gap: 9px; margin-left: 21px; width: 246px; font: 28px Lato, sans-serif; color: #253858; }
.brand span { letter-spacing: .6px; padding-bottom: 3px; -webkit-text-stroke: .3px #253858; }
.menu { display: grid; grid-template-columns: 144px 123px 105px 161px 112px 100px; align-self: stretch; }
.menu a { display: flex; align-items: center; justify-content: space-between; font-size: 20px; font-weight: 600; letter-spacing: -.37px; color: #344563; padding-top: 2px; margin-right: 29px; position: relative; }
.menu .on { color: #0052cc; }
.menu .on::after { content: ""; position: absolute; left: -3px; right: -3px; bottom: 0; height: 4px; background: #0052cc; }
.chev { width: 14px; height: 9px; opacity: .5; margin-bottom: 2px; }
.chev.dark { opacity: 1; color: #344563; margin-bottom: 0; }
.primary { background: #0052cc; color: #fff; border-radius: 4px; height: 48px; font-size: 20px; font-weight: 600; letter-spacing: -.2px; padding-top: 2px; }
.create { width: 98px; letter-spacing: -.35px; }
.search { width: 300px; height: 48px; margin-left: 183px; border: 3px solid #dfe1e6; border-radius: 7px; display: flex; align-items: center; gap: 13px; padding-left: 10px; color: #5e6c84; font: 21px "Liberation Sans", sans-serif; }
.navicons { display: grid; grid-template-columns: 60px 60px 60px 66px; place-items: center; margin-left: 3px; }
.av { width: 36px; height: 36px; border-radius: 50%; display: grid; place-items: center; font-size: 16px; font-weight: 600; letter-spacing: -.3px; flex: none; }
.ms { background: #5243aa; color: #fff; }
.ss { background: #ff991f; color: #253858; }
.big { width: 48px; height: 48px; font-size: 21px; }

/* sidebar */
.app { display: flex; height: 780px; flex: none; }
.sidebar { width: 363px; background: #fafbfc; border-right: 2px solid #e4e5e8; }
.project { height: 122px; display: flex; gap: 24px; padding: 55px 0 0 39px; }
.project > div { margin-top: -8px; }
h2 { font-size: 20px; font-weight: 600; line-height: 28px; letter-spacing: -.3px; color: #42526e; }
.project p { font-size: 17px; line-height: 26px; color: #6b778c; letter-spacing: 0; }
.sidescroll { display: flex; height: 544px; }
.list { width: 335px; }
h3 { font-size: 16px; font-weight: 700; line-height: 22px; color: #42526e; margin: 20px 0 9px 41px; letter-spacing: 0; }
.item { display: flex; align-items: center; height: 60px; margin: 0 15px; padding-left: 29px; color: #42526e; font-size: 20px; position: relative; letter-spacing: -.1px; }
.item svg { margin-right: 27px; margin-left: 1px; }
.item span { line-height: 28px; padding-top: 3px; }
.sel { background: #e6f0fc; color: #0052cc; border-radius: 5px; }
.sel svg { margin: 0 26px 0 0; }
.sel::before { content: ""; position: absolute; left: 0; top: 18px; width: 6px; height: 24px; background: #0052cc; border-radius: 0 4px 4px 0; }
.dev { margin: 32px 0 15px 41px; }
hr { border: 0; height: 3px; background: #e6e8eb; margin: 18px 12px 15px; }
.pages svg { margin-right: 31px; }
.cut { margin-top: 6px; padding-left: 27px; margin-bottom: 17px; }
.cut svg { margin-left: 0; margin-right: 28px; }
.vbar { width: 25px; background: #f1f1f1; display: flex; flex-direction: column; align-items: center; justify-content: space-between; }
.vbar svg { width: 11px; height: 6px; color: #505050; margin: 10px 0 9px; }
.vbar .dis { color: #a3a3a3; }
.vbar .dn { transform: scaleY(-1); }
.thumb { width: 21px; height: 448px; background: #c1c1c1; margin-bottom: auto; }
.sidefoot { width: 311px; margin-left: 12px; margin-top: -3px; border-top: 3px solid #e9ebee; color: #42526e; font-size: 17px; letter-spacing: .05px; padding-top: 12px; }
.sidefoot p, .sidefoot b { width: 336px; text-align: center; line-height: 26px; display: block; }
.sidefoot b { margin-top: 14px; color: #6b778c; font-weight: 600; letter-spacing: -.15px; }

/* project content */
.main { width: 1557px; display: flex; flex-direction: column; position: relative; }
.crumbs { display: flex; gap: 15px; padding: 41px 0 0 57px; height: 69px; font-size: 20px; line-height: 28px; letter-spacing: -.25px; color: #6b778c; }
.head { display: flex; height: 58px; align-items: center; padding: 0 60px 0 57px; justify-content: space-between; }
h1 { font-size: 34px; font-weight: 600; letter-spacing: -.45px; line-height: 48px; margin-bottom: 2px; }
.actions { display: flex; align-items: center; }
.actions > svg { margin-right: 26px; }
.actions > svg + svg { margin-right: 25px; }
.actions > svg + svg + svg { margin-right: 10px; }
.days { width: 154px; font-size: 17px; letter-spacing: .02px; color: #6b778c; }
.actions .primary { width: 189px; margin-right: 18px; }
.dots { width: 48px; height: 48px; background: #f4f5f7; border-radius: 4px; gap: 4px; }
.dots i { width: 6.500px; height: 6.500px; border-radius: 50%; background: #42526e; }
.filters { display: flex; align-items: center; height: 126px; padding: 2px 60px 0 57px; font-size: 20px; font-weight: 600; letter-spacing: -.3px; color: #42526e; }
.find { width: 180px; height: 60px; border: 3px solid #dfe1e6; border-radius: 5px; background: #fafbfc; display: flex; align-items: center; justify-content: flex-end; padding-right: 14px; color: #5e6c84; margin-right: 21px; }
.find svg { width: 20px; height: 20px; }
.people { display: flex; align-items: center; }
.people .ms { box-shadow: 0 0 0 3px #fff; margin: 0 -3px 0 3px; z-index: 1; }
.add { background: #dfe1e6; margin: 0 36px 0 15px; }
.add svg { margin: 0 0 0 3px; }
.epicf { margin-right: 18px; width: 38px; padding-top: 2px; font-weight: 550; letter-spacing: -.1px; }
.group { font-size: 16px; font-weight: 400; color: #6b778c; margin-left: auto; margin-right: 12px; letter-spacing: -.2px; }
.grey { background: #f4f5f7; border-radius: 4px; height: 48px; font-weight: 550; letter-spacing: 0; padding-top: 2px; color: #42526e; }
.none { width: 130px; gap: 16px; padding-right: 11px; margin-right: 8px; }
.ins { width: 152px; gap: 9px; }
.ins svg { margin-bottom: 2px; }

/* board */
.board { display: flex; padding-left: 57px; height: 487px; margin-top: 16px; position: relative; }
.lane { width: 1415px; height: 487px; display: flex; gap: 18px; overflow: hidden; position: relative; }
.lane::before { content: ""; position: absolute; z-index: 4; left: 0; top: 0; bottom: 0; width: 16px; background: linear-gradient(90deg, rgba(9,30,66,.09), transparent); }
.lane::after { content: ""; position: absolute; right: 0; top: 0; bottom: 0; width: 14px; background: linear-gradient(270deg, rgba(9,30,66,.07), transparent); }
.col { width: 405px; flex: none; background: #f4f5f7; border-radius: 10px 10px 0 0; }
.col.first { width: 62px; border-radius: 0 10px 0 0; }
.col > header { height: 72px; padding: 0 0 0 23px; display: flex; align-items: center; font-size: 17px; font-weight: 600; letter-spacing: .05px; word-spacing: 1px; color: #5e6c84; box-shadow: 0 3px 0 rgba(9,30,66,.07); position: relative; z-index: 2; background: #f4f5f7; border-radius: 10px 10px 0 0; }
.col.first > header { border-radius: 0 10px 0 0; }
.ck { width: 16px; height: 12px; margin-left: 22px; }
.cards { height: 415px; overflow: hidden; padding: 0 7px 0 8px; }
.card { background: #fff; border-radius: 5px; box-shadow: 0 2px 2px rgba(9,30,66,.25), 0 0 1px rgba(9,30,66,.3); padding: 20px 0 21px 18px; margin-bottom: 6px; }
.cutoff { margin-top: -27px; }
.empty { height: 60px; }
.card p { font-size: 20px; line-height: 30px; letter-spacing: -.02px; color: #253858; }
.tag { display: block; width: max-content; height: 31.500px; line-height: 32.500px; margin-top: 10px; padding: 0 5.500px; border-radius: 4px; background: #eae6ff; color: #403294; font-size: 16px; font-weight: 700; letter-spacing: .13px; }
.card footer { display: flex; align-items: center; height: 36px; margin-top: 15px; padding-right: 21px; }
.card footer.plain { margin-top: 13px; }
.st { width: 22px; height: 22px; margin: 4px 12px 0 1px; }
.key { font-size: 17px; font-weight: 600; letter-spacing: -.2px; color: #7a869a; margin-right: auto; }
.pts { width: 28px; height: 24px; border-radius: 12px; background: #dfe1e6; font-size: 17px; line-height: 25px; text-align: center; margin: 5px 15px 0 10px; }
.card footer .ck { margin: 2px 0 0; }
.card footer .ck.last { margin: 2px 19px 0 0; }
.plus { width: 48px; height: 48px; background: #f4f5f7; border-radius: 4px; flex: none; }
.fade { width: 60px; }
.vbar.page { height: 487px; }
.page .thumb { height: 137px; margin-top: 18px; }
.vbar.page svg { margin: 10px 0 9px; }
.hbar { height: 24px; background: #f1f1f1; display: flex; align-items: center; padding-left: 6px; }
.hbar svg { width: 6px; height: 12px; }
.hthumb { width: 1214px; height: 21px; background: #c1c1c1; margin-left: 281px; }
.rt { margin-left: 10px; }
.corner { width: 25px; height: 24px; background: #dcdcdc; margin-left: auto; }
.minimap { position: absolute; left: 1366px; top: 670px; width: 155px; height: 75px; border-radius: 5px; background: #fff; box-shadow: 0 8px 24px rgba(9,30,66,.25), 0 0 2px rgba(9,30,66,.1); display: flex; gap: 3px; padding: 11px 10px; z-index: 5; }
.minimap i { width: 31.500px; height: 54px; background: #ebecf0; border-radius: 4px; }
.view { position: absolute; left: 32px; top: 8px; width: 115px; height: 60px; border: 3px solid #4c9aff; border-radius: 4px; }

/* taskbar */
.taskbar { height: 60px; flex: none; display: flex; background: linear-gradient(90deg, #1c2430 0, #1b2832 30%, #24353c 58%, #22333b 75%, #1a2530 100%); color: #fff; position: relative; z-index: 6; }
.apps { display: grid; grid-template-columns: 72px 72px 72px 72px 82px 73px 74px 74px 75px 75px 76px 75px 74px 75px 75px; }
.t { display: grid; place-items: center; position: relative; }
.run::after { content: ""; position: absolute; left: 7px; right: 7px; bottom: 0; height: 3px; background: #76b9ed; }
.exp::after { left: 11px; right: 10px; background: linear-gradient(90deg, #76b9ed 47px, #3e5f7a 47px, #3e5f7a 49px, #5c8fb8 49px); }
.edge { padding-right: 5px; }
.cur { background: #49545d; padding-left: 3px; }
.cur::after { left: 0; right: 0; }
.lft { margin-right: 1px; }
.acro { margin-bottom: 3px; }
.ps { width: 33px; height: 32px; border-radius: 5px; background: #001e36; color: #31a8ff; font-size: 19px; font-weight: 600; line-height: 29px; text-align: center; margin-bottom: 2px; }
.wd { font: bold 14px "Open Sans", sans-serif; fill: #fff; }
.tray { flex: 1; display: flex; align-items: center; position: relative; padding-left: 232px; }
.tray::after { content: ""; position: absolute; right: 6px; top: 0; bottom: 0; width: 1px; background: #7b858c; }
.help { margin-top: 5px; }
.cloud { margin: 0 11px 2px 22px; }
.temp { font-size: 19px; letter-spacing: .3px; width: 82px; padding-top: 2px; }
.bat { margin: 0 16px 0 16px; }
.wifi { margin-right: 14px; }
.eng { font-size: 17px; letter-spacing: -.3px; margin-left: 14px; width: 54px; }
.clock { width: 94px; display: flex; flex-direction: column; align-items: center; font-size: 17px; line-height: 28px; letter-spacing: .3px; padding-top: 1px; }
.notif { margin-left: 28px; position: relative; margin-bottom: 2px; }
.notif i { position: absolute; left: 11px; top: 11px; width: 24px; height: 24px; border-radius: 50%; background: #2a2e33; border: 1px solid #9aa0a5; font: 600 16px/22px "Open Sans", sans-serif; text-align: center; }
```
